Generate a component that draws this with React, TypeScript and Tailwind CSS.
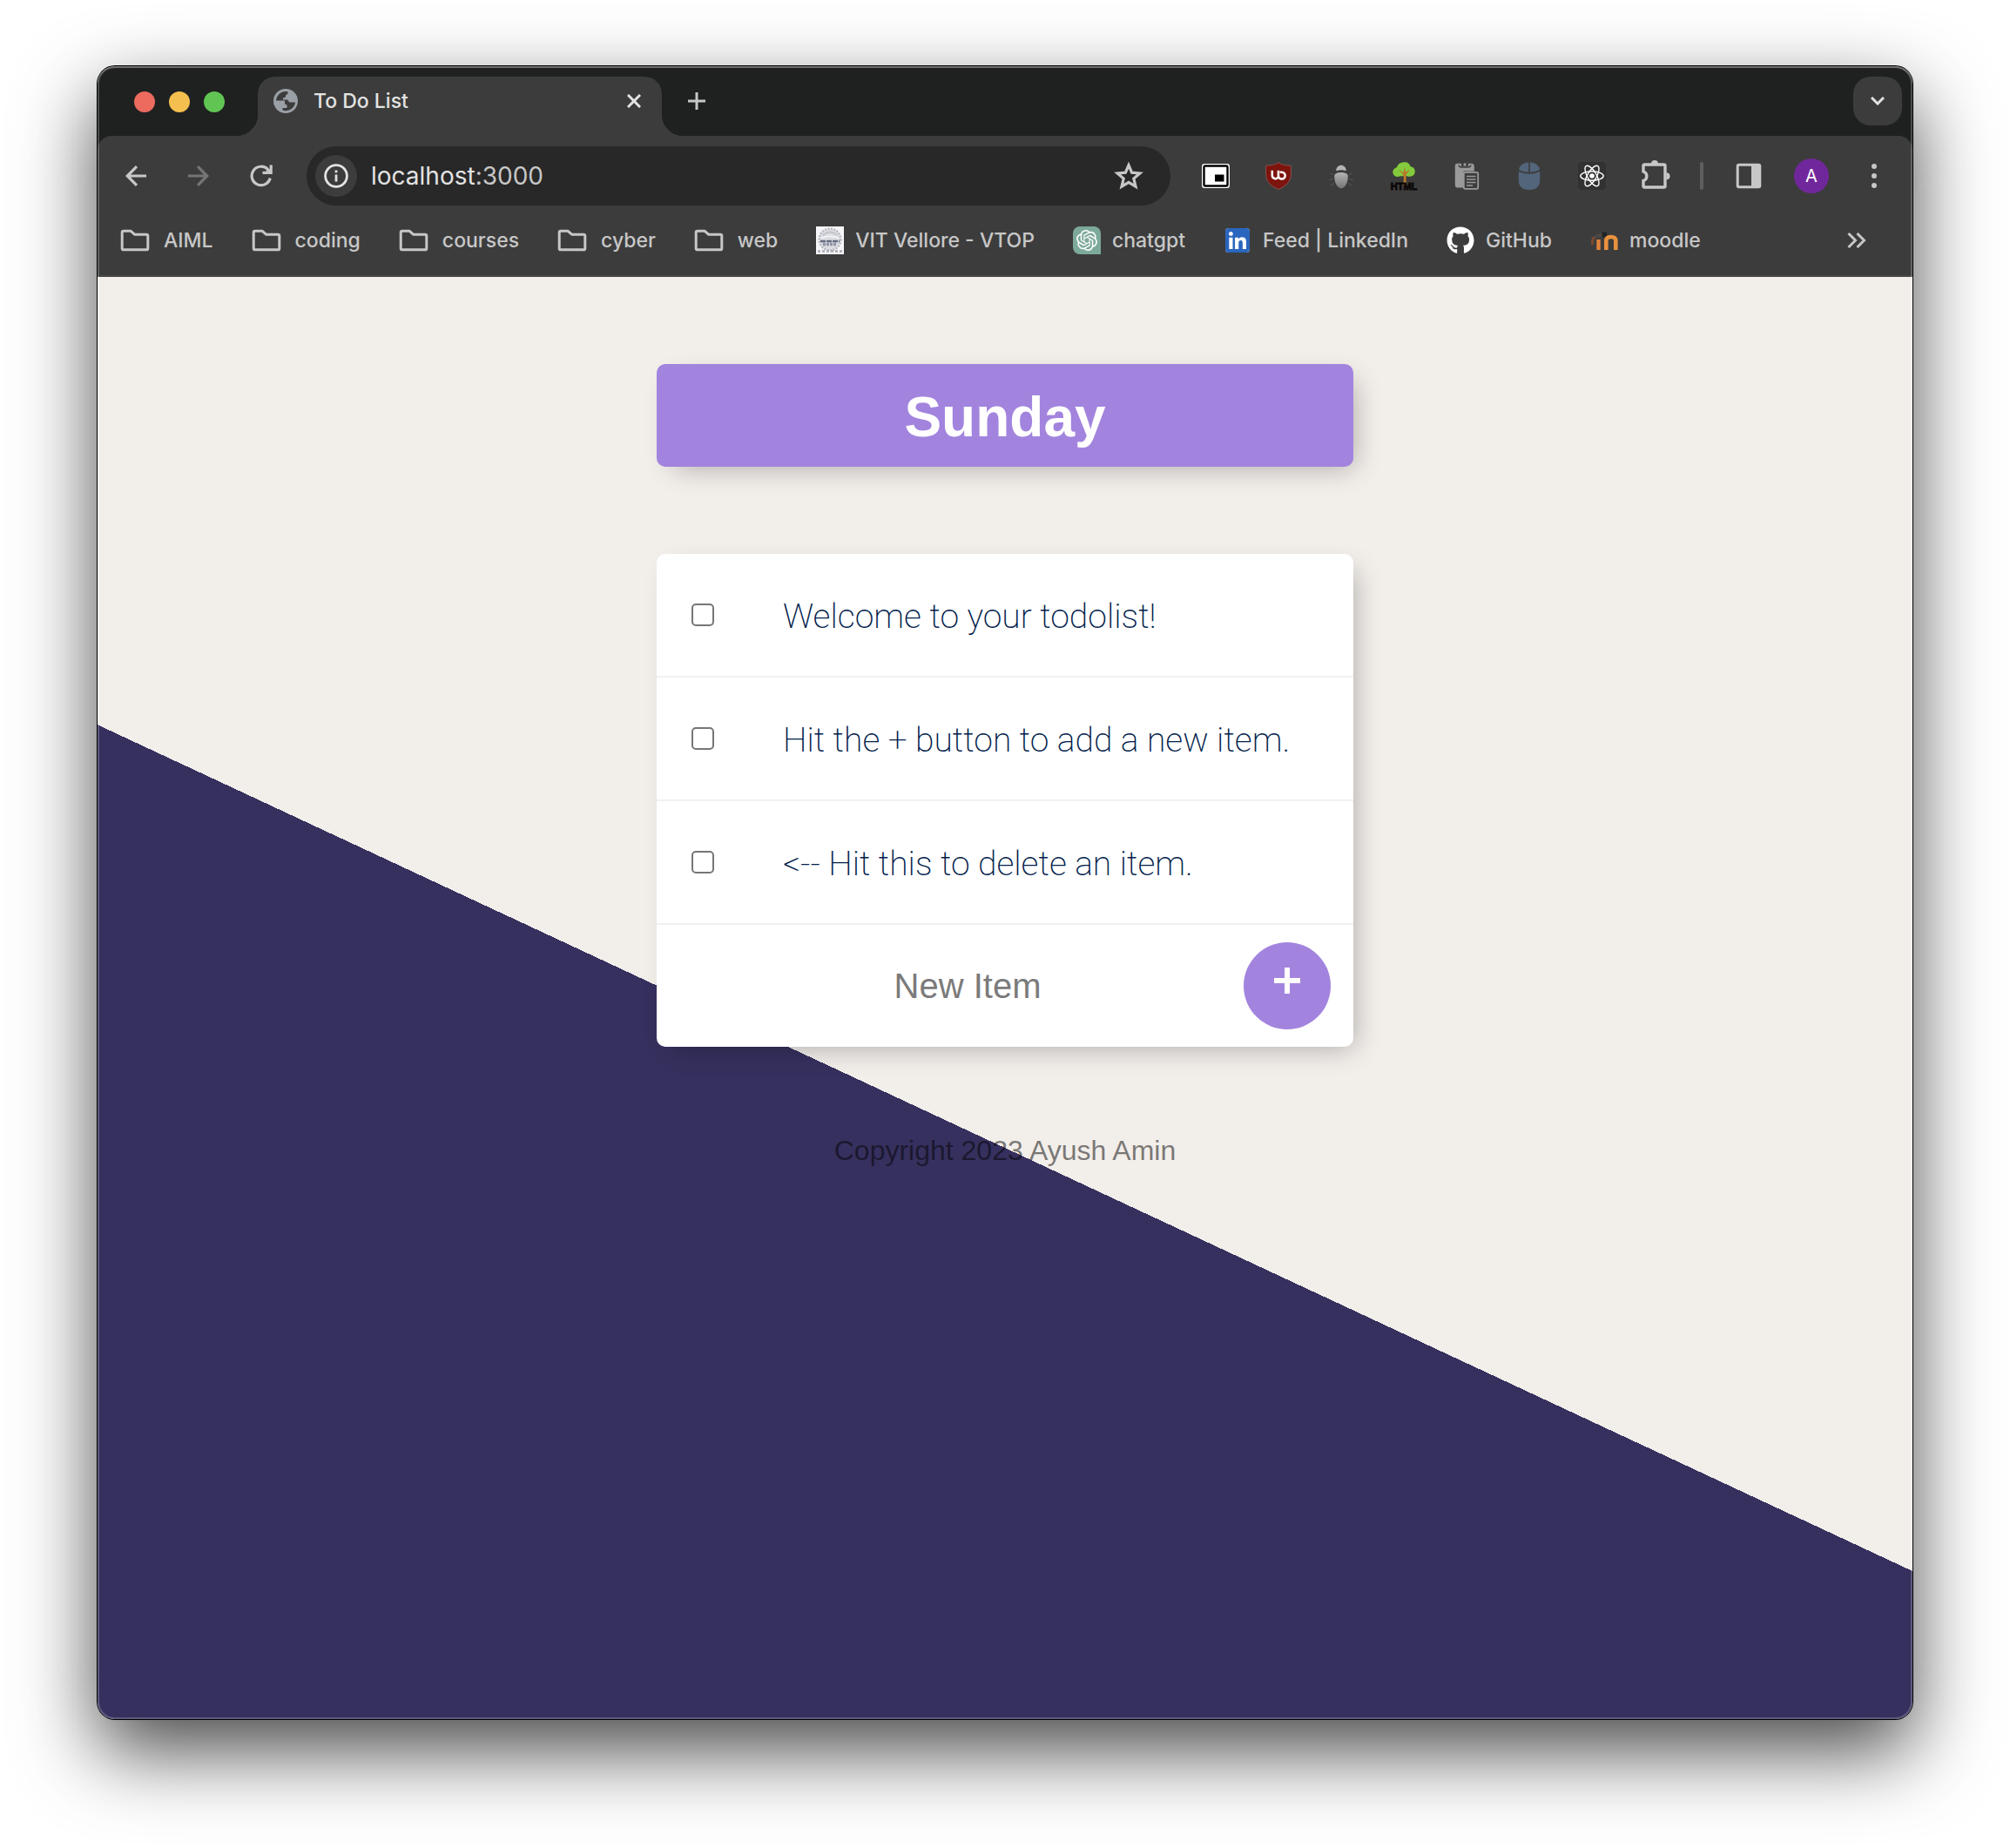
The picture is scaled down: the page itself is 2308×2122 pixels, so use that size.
import type { ReactNode } from 'react';
import { FaGithub, FaLinkedin } from 'react-icons/fa';
import { SiOpenai } from 'react-icons/si';

function GlobeIcon() {
  return (
    <svg viewBox="0 0 28 28" className="size-7" aria-hidden="true">
      <circle cx="14" cy="14" r="14" fill="#9aa0a6" />
      <path d="M3 13.5A11.2 11.2 0 0 1 16.5 3.2V5.5L14 7.5V9.5L11 10.5V12.5H16L18.5 15.5H25.1A11.2 11.2 0 0 1 10.5 24.6V22H15.5V18.5L13 17.5V13.5Z" fill="#3c3c3c" />
    </svg>
  );
}

function ArrowIcon({ className }: { className: string }) {
  return (
    <svg viewBox="0 0 24 24" className={className} fill="none" stroke="currentColor" strokeWidth="3.2" aria-hidden="true">
      <path d="M24 12H3M13 1.2L2.2 12L13 22.8" />
    </svg>
  );
}

function ReloadIcon() {
  return (
    <svg viewBox="0 0 26 26" className="size-[26px]" fill="none" stroke="#c7c7c7" strokeWidth="3.2" aria-hidden="true">
      <path d="M23.2 15.5A10.7 10.7 0 1 1 20.8 5.8L24 9" />
      <path d="M24.2 0.5V9.4H14.5" />
      <path d="M20 5L24 9H18Z" fill="#c7c7c7" stroke="none" />
    </svg>
  );
}

function InfoIcon() {
  return (
    <svg viewBox="0 0 28 28" className="size-7" aria-hidden="true">
      <circle cx="14" cy="14" r="12.4" fill="none" stroke="#e3e3e3" strokeWidth="2.8" />
      <path d="M12.6 7.5H15.4V10.2H12.6ZM12.6 12.4H15.4V20.6H12.6Z" fill="#e3e3e3" />
    </svg>
  );
}

function StarIcon() {
  return (
    <svg viewBox="0 0 34 34" className="size-[34px]" fill="none" stroke="#c7c7c7" strokeWidth="3.2" aria-hidden="true">
      <path d="M17 4.600L20.600 13.200L29.900 14L22.800 20.100L25 29.200L17 24.300L9 29.200L11.200 20.100L4.100 14L13.400 13.200Z" />
    </svg>
  );
}

function FolderIcon() {
  return (
    <svg viewBox="0 0 34 26" className="h-[26px] w-[34px]" fill="none" stroke="#c7c7c7" strokeWidth="3" strokeLinejoin="round" aria-hidden="true">
      <path d="M4 2.2H12L16.5 6.2H30.2Q31.8 6.2 31.8 7.8V22.2Q31.8 23.8 30.2 23.8H4Q2.2 23.8 2.2 22.2V4Q2.2 2.2 4 2.2Z" />
    </svg>
  );
}

function PipIcon() {
  return (
    <svg viewBox="0 0 32 28" className="h-7 w-8" aria-hidden="true">
      <rect width="32" height="28" rx="3" fill="#fff" />
      <rect x="2.5" y="2.5" width="27" height="23" rx="1.5" fill="#fff" stroke="#000" strokeWidth="2.4" />
      <rect x="15" y="12.5" width="10.5" height="8" fill="#000" />
    </svg>
  );
}

function ShieldIcon() {
  return (
    <svg viewBox="0 0 32 32" className="size-8" aria-hidden="true">
      <path d="M16 .6C20 3.4 24.500 4 30.400 4.200V14C30.400 23 24 28 16 31.400C8 28 1.600 23 1.600 14V4.200C7.500 4 12 3.400 16 .6Z" fill="#7d140e" stroke="#8d5d5a" strokeWidth=".8" />
      <path d="M8.800 9.800V15.600A3.600 3.600 0 0 0 15.600 17.200M15.900 9.800V15.600A3.900 3.900 0 1 0 19.800 11.800H17.600" fill="none" stroke="#fff" strokeWidth="2.500" />
    </svg>
  );
}

function BugIcon() {
  return (
    <svg viewBox="0 0 32 32" className="size-8" aria-hidden="true">
      <defs>
        <linearGradient id="bug" x1="0" y1="0" x2="0" y2="1">
          <stop offset="0" stopColor="#b4b4b4" />
          <stop offset="1" stopColor="#757575" />
        </linearGradient>
      </defs>
      <path d="M10.200 10.200C10.200 1.500 21.800 1.500 21.800 10.200Q16 8.500 10.200 10.200Z" fill="#b4b4b4" />
      <path d="M8.200 16C8.200 10.500 23.800 10.500 23.800 16C23.800 24 20.500 30.200 16 30.200S8.200 24 8.200 16Z" fill="url(#bug)" />
      <path d="M7 14.500L3.500 13M6.500 19.500L2.500 20.500M7.500 24.500L4 27M25 14.500L28.500 13M25.500 19.500L29.500 20.500M24.500 24.500L28 27" stroke="#5c5c5c" strokeWidth="1" fill="none" />
    </svg>
  );
}

function TreeIcon() {
  return (
    <svg viewBox="0 0 32 32" className="size-8 overflow-visible" aria-hidden="true">
      <path d="M16 .3C20 -.2 23 2 23.500 5.200C27.500 5.500 29.500 9 28.600 12.500C27.500 16.500 23 17.500 20 16.200H12C8.500 18 4.500 16.500 3.500 13C2.700 10 4.500 7 8 6.300C8.500 3 12 .5 16 .3Z" fill="#83cb3c" />
      <path d="M15 27C16 22 16.200 17 15 14L10 9L15.500 12L17 5.500L18 11.500L23 8.500L18.800 14.500C18.200 18 18.500 23 20 28Z" fill="#b9782a" />
      <text x="16" y="31.500" textAnchor="middle" fontFamily="Liberation Sans, sans-serif" fontWeight="bold" fontSize="11" fill="#0c0707" stroke="#0c0707" strokeWidth=".8">HTML</text>
    </svg>
  );
}

function PasteIcon() {
  return (
    <svg viewBox="0 0 32 32" className="size-8" aria-hidden="true">
      <path d="M5.500 1.800H10V5H18V1.800H21.500Q24.800 1.800 24.800 5V10.500H12.500V29.500H5.500Q2.800 29.500 2.800 26.500V4.500Q2.800 1.800 5.500 1.800Z" fill="#9a9a9a" />
      <path d="M7 3.500Q7.500 6 10 6H18Q20.500 6 21 3.500" fill="none" stroke="#3c3c3c" strokeWidth="1.300" />
      <circle cx="14" cy="3" r="2.200" fill="#9a9a9a" stroke="#3c3c3c" />
      <rect x="12.800" y="11.800" width="16.400" height="19" rx="1.800" fill="#3c3c3c" stroke="#9a9a9a" strokeWidth="1.800" />
      <path d="M16 16.500H26.500M16 20H26.500M16 23.500H26.500M16 27H23" stroke="#9a9a9a" strokeWidth="1.700" />
    </svg>
  );
}

function MouseIcon() {
  return (
    <svg viewBox="0 0 32 32" className="size-8" fill="#52657a" aria-hidden="true">
      <path d="M15.200 .2V11.800Q9 11.800 4 9Q5 1.500 15.200 .2ZM16.800 .2V11.800Q23 11.800 28 9Q27 1.500 16.800 .2Z" />
      <path d="M3.800 11Q16 16.500 28.200 11V21Q28 32 16 32T3.800 21Z" />
    </svg>
  );
}

function ReactIcon() {
  return (
    <svg viewBox="0 0 32 32" className="size-8 rounded-sm bg-[#323232]" fill="none" stroke="#fff" strokeWidth="1.400" aria-hidden="true">
      <circle cx="16" cy="16" r="2.800" fill="#fff" stroke="none" />
      <ellipse cx="16" cy="16" rx="13.200" ry="5.200" />
      <ellipse cx="16" cy="16" rx="13.200" ry="5.200" transform="rotate(60 16 16)" />
      <ellipse cx="16" cy="16" rx="13.200" ry="5.200" transform="rotate(120 16 16)" />
    </svg>
  );
}

function PuzzleIcon() {
  return (
    <svg viewBox="0 0 36 36" className="size-9" aria-hidden="true">
      <path d="M14 4A4 4 0 0 1 22 4ZM31.500 14.200A4 4 0 0 1 31.500 22.200Z" fill="#c7c7c7" />
      <path d="M6.500 5H28.500Q30 5 30 6.500V29.500Q30 31 28.500 31H6.500Q5 31 5 29.500V23.500A5.500 5.500 0 0 0 5 13V6.500Q5 5 6.500 5Z" fill="none" stroke="#c7c7c7" strokeWidth="3.400" />
    </svg>
  );
}

function SidePanelIcon() {
  return (
    <svg viewBox="0 0 30 30" className="size-[30px]" aria-hidden="true">
      <rect x="2.200" y="2.200" width="25.600" height="25.600" rx="1.500" fill="none" stroke="#c7c7c7" strokeWidth="3" />
      <rect x="18" y="2" width="10" height="26" fill="#c7c7c7" />
    </svg>
  );
}

function VitIcon() {
  return (
    <svg viewBox="0 0 32 32" className="size-8" aria-hidden="true">
      <rect width="32" height="32" fill="#f6f6f8" />
      <circle cx="16" cy="15" r="12.500" fill="#dcdde2" stroke="#b9bac2" strokeWidth="2.500" strokeDasharray="2 1.500" />
      <path d="M8 10Q16 3 24 10" stroke="#c3c4cb" strokeWidth="2" fill="none" />
      <path d="M6 13.500Q16 9 26 13.500" stroke="#f6f6f8" strokeWidth="1.500" fill="none" />
      <path d="M5 17H27" stroke="#666b80" strokeWidth="2.500" strokeDasharray="6 1" />
      <path d="M8 20.500H24" stroke="#8f93a5" strokeWidth="3.500" strokeDasharray="3 1" />
      <path d="M2 28.500H30" stroke="#a9aab4" strokeWidth="2.500" strokeDasharray="3 2" />
    </svg>
  );
}

function ChatIcon() {
  return (
    <span className="flex size-8 items-center justify-center rounded-lg rounded-br-none bg-[#7da99b]">
      <SiOpenai className="size-6 text-white" />
    </span>
  );
}

function LinkedInIcon() {
  return (
    <span className="flex size-8 items-center justify-center">
      <span className="flex size-7 items-center justify-center overflow-hidden rounded-sm bg-white">
        <FaLinkedin className="size-8 shrink-0 text-[#2a66bd]" />
      </span>
    </span>
  );
}

function MoodleIcon() {
  return (
    <svg viewBox="0 0 32 32" className="size-8" fill="none" aria-hidden="true">
      <path d="M2.500 21V16.500Q3 12 7 12.500" stroke="#7a4a2c" strokeWidth="3" />
      <path d="M1 12L14 6.500L19 9.500L9 13Z" fill="#4b4746" />
      <path d="M13 6.500H19V12.500H14Z" fill="#232326" />
      <path d="M9.500 27V15" stroke="#e0823c" strokeWidth="4.400" />
      <path d="M18.300 27V16.500Q18.300 12 23.800 12T29.300 16.500V27" stroke="#e8913f" strokeWidth="4.600" />
    </svg>
  );
}

const extensions: { name: string; icon: ReactNode }[] = [
  { name: 'Picture in picture', icon: <PipIcon /> },
  { name: 'Ad blocker', icon: <ShieldIcon /> },
  { name: 'Bug reporter', icon: <BugIcon /> },
  { name: 'HTML tree', icon: <TreeIcon /> },
  { name: 'Clipboard', icon: <PasteIcon /> },
  { name: 'Mouse', icon: <MouseIcon /> },
  { name: 'React tools', icon: <ReactIcon /> },
  { name: 'Extensions', icon: <PuzzleIcon /> },
];

const folders = ['AIML', 'coding', 'courses', 'cyber', 'web'];

const bookmarks: { name: string; icon: ReactNode }[] = [
  { name: 'VIT Vellore - VTOP', icon: <VitIcon /> },
  { name: 'chatgpt', icon: <ChatIcon /> },
  { name: 'Feed | LinkedIn', icon: <LinkedInIcon /> },
  { name: 'GitHub', icon: <FaGithub className="size-8 text-white" /> },
  { name: 'moodle', icon: <MoodleIcon /> },
];

const items = [
  'Welcome to your todolist!',
  'Hit the + button to add a new item.',
  '<-- Hit this to delete an item.',
];

function TabStrip() {
  return (
    <div className="flex h-20 items-start bg-[#1f2120] pr-3">
      <div className="flex gap-4 pt-[29px] pl-[42px]">
        <button aria-label="Close window" className="size-6 rounded-full bg-[#ed6a5e]" />
        <button aria-label="Minimize window" className="size-6 rounded-full bg-[#f5bf4f]" />
        <button aria-label="Zoom window" className="size-6 rounded-full bg-[#61c554]" />
      </div>
      <div className="relative mt-3 ml-[38px] flex h-[68px] w-[464px] items-start rounded-t-[20px] bg-[#3c3c3c] px-[18px] pt-3.5 before:absolute before:bottom-0 before:-left-6 before:size-6 before:bg-[radial-gradient(circle_at_0_0,transparent_24px,#3c3c3c_24px)] after:absolute after:-right-6 after:bottom-0 after:size-6 after:bg-[radial-gradient(circle_at_100%_0,transparent_24px,#3c3c3c_24px)]">
        <GlobeIcon />
        <span className="ml-[18px] flex-1 text-[23px] leading-7 font-medium text-[#e3e3e3]">To Do List</span>
        <button aria-label="Close tab" className="flex size-7 items-center justify-center">
          <svg viewBox="0 0 16 16" className="size-4" stroke="#e3e3e3" strokeWidth="3" aria-hidden="true">
            <path d="M1 1L15 15M15 1L1 15" />
          </svg>
        </button>
      </div>
      <button aria-label="New tab" className="mt-5 ml-5 flex size-10 items-center justify-center">
        <svg viewBox="0 0 20 20" className="size-5" stroke="#c7c7c7" strokeWidth="3" aria-hidden="true">
          <path d="M0 10H20M10 0V20" />
        </svg>
      </button>
      <button aria-label="Search tabs" className="mt-3 ml-auto flex size-14 items-center justify-center rounded-[20px] bg-[#3c3c3c]">
        <svg viewBox="0 0 16 10" className="h-2.5 w-4" fill="none" stroke="#e3e3e3" strokeWidth="3" aria-hidden="true">
          <path d="M1 1L8 8L15 1" />
        </svg>
      </button>
    </div>
  );
}

function Toolbar() {
  return (
    <div className="flex items-center px-5 pt-3">
      <div className="flex gap-6">
        <button aria-label="Back" className="flex size-12 items-center justify-center text-[#c7c7c7]">
          <ArrowIcon className="size-6" />
        </button>
        <button aria-label="Forward" className="flex size-12 items-center justify-center text-[#757575]">
          <ArrowIcon className="size-6 rotate-180" />
        </button>
        <button aria-label="Reload" className="flex size-12 items-center justify-center">
          <ReloadIcon />
        </button>
      </div>
      <div className="mx-7 flex h-[68px] flex-1 items-center rounded-full bg-[#282828] px-2.5">
        <button aria-label="Site information" className="flex size-12 items-center justify-center rounded-full bg-[#3c3c3c]">
          <InfoIcon />
        </button>
        <span className="ml-4 flex-1 text-[28px] leading-9 text-[#e3e3e3]">
          localhost<span className="text-[#c7c7c7]">:3000</span>
        </span>
        <button aria-label="Bookmark this tab" className="mr-3.5 flex size-12 items-center justify-center">
          <StarIcon />
        </button>
      </div>
      <div className="flex gap-6">
        {extensions.map((extension) => (
          <button key={extension.name} aria-label={extension.name} className="flex size-12 items-center justify-center">
            {extension.icon}
          </button>
        ))}
      </div>
      <div className="mx-7 h-8 w-1 rounded-full bg-[#5f5f5f]" />
      <div className="flex gap-6">
        <button aria-label="Side panel" className="flex size-12 items-center justify-center">
          <SidePanelIcon />
        </button>
        <button aria-label="Profile" className="flex size-12 items-center justify-center">
          <span className="flex size-10 items-center justify-center rounded-full bg-[#71279c] text-xl text-white">A</span>
        </button>
        <button aria-label="Menu" className="flex size-12 flex-col items-center justify-center gap-[5px]">
          <span className="size-1.5 rounded-full bg-[#c7c7c7]" />
          <span className="size-1.5 rounded-full bg-[#c7c7c7]" />
          <span className="size-1.5 rounded-full bg-[#c7c7c7]" />
        </button>
      </div>
    </div>
  );
}

function BookmarksBar() {
  return (
    <nav aria-label="Bookmarks" className="flex items-center border-b-2 border-[#474747] pt-5 pr-[53px] pb-5 pl-[26px] text-[23px] leading-10 font-medium text-[#c7c7c7]">
      <div className="flex gap-11">
        {folders.map((name) => (
          <button key={name} className="flex items-center gap-4">
            <FolderIcon />
            {name}
          </button>
        ))}
        {bookmarks.map((bookmark) => (
          <a key={bookmark.name} href="#" className="flex items-center gap-[13px]">
            {bookmark.icon}
            {bookmark.name}
          </a>
        ))}
      </div>
      <button aria-label="More bookmarks" className="ml-auto">
        <svg viewBox="0 0 22 18" className="h-[18px] w-[22px]" fill="none" stroke="#c7c7c7" strokeWidth="3" aria-hidden="true">
          <path d="M1.500 1L9.500 9L1.500 17M11.500 1L19.500 9L11.500 17" />
        </svg>
      </button>
    </nav>
  );
}

function TodoPage() {
  return (
    <main className="flex flex-1 flex-col items-center bg-[linear-gradient(25deg,#36305e_calc(50%_-_156px),#f2eeea_calc(50%_-_156px))] pt-[100px] font-['Liberation_Sans',Arial,sans-serif]">
      <h1 className="w-[800px] rounded-[10px] bg-[#a284de] pt-[22px] pb-[18px] text-center text-[64px] leading-[78px] font-bold text-white shadow-[10px_10px_30px_-10px_rgba(0,0,0,0.3)]">
        Sunday
      </h1>
      <form className="my-[100px] w-[800px] rounded-[10px] bg-white shadow-[10px_10px_30px_-10px_rgba(0,0,0,0.3)]" onSubmit={(event) => event.preventDefault()}>
        {items.map((item) => (
          <label key={item} className="flex h-[142px] items-center border-b-2 border-[#f1f1f1] pl-10">
            <input type="checkbox" className="size-[26px] appearance-none rounded-[5px] border-2 border-[#767676] bg-white" />
            <span className="ml-[79px] pt-1 font-['Roboto','Liberation_Sans',sans-serif] text-[39px] leading-[46px] font-extralight text-[#00204a]">{item}</span>
          </label>
        ))}
        <div className="flex h-[140px] items-center pr-[26px] pl-10">
          <input
            type="text"
            aria-label="New item"
            placeholder="New Item"
            className="min-w-0 flex-1 bg-transparent text-center text-[40px] leading-[46px] text-[#00204a] outline-none placeholder:text-[#7b7b7b]"
          />
          <button aria-label="Add item" className="flex size-[100px] items-center justify-center rounded-full bg-[#a284de] pb-3 text-white">
            <svg viewBox="0 0 30 30" className="size-[30px]" stroke="currentColor" strokeWidth="6" aria-hidden="true">
              <path d="M0 15H30M15 0V30" />
            </svg>
          </button>
        </div>
      </form>
      <footer className="text-[32px] leading-[38px] text-black/50">Copyright 2023 Ayush Amin</footer>
    </main>
  );
}

export default function App() {
  return (
    <div className="flex min-h-screen flex-col bg-white px-28 pt-[76px] pb-[148px]">
      <div className="relative flex flex-1 flex-col overflow-hidden rounded-[20px] font-['Inter','Liberation_Sans',sans-serif] shadow-[0_0_0_1px_#000,0_36px_90px_rgba(0,0,0,0.72)]">
        <TabStrip />
        <div className="bg-[#1f2120]">
          <div className="rounded-t-2xl bg-[#3c3c3c]">
            <Toolbar />
            <BookmarksBar />
          </div>
        </div>
        <TodoPage />
        <div className="pointer-events-none absolute inset-0 rounded-[20px] shadow-[inset_0_0_0_2px_rgba(255,255,255,0.2),inset_0_2px_0_0_rgba(255,255,255,0.2)]" />
      </div>
    </div>
  );
}
